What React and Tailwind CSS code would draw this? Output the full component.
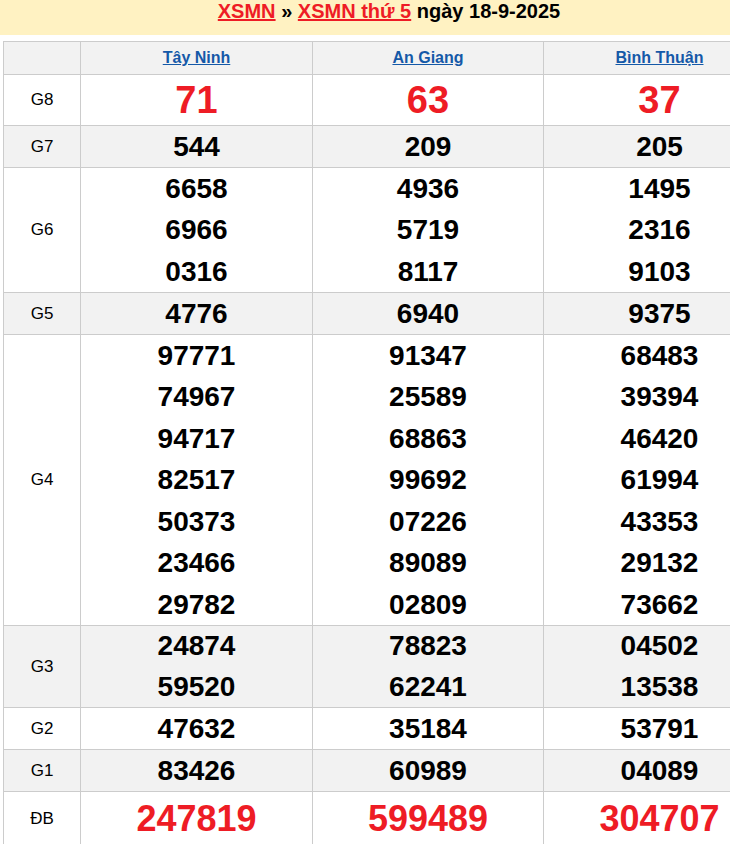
import React from "react";

const provinces = ["Tây Ninh", "An Giang", "Bình Thuận"];

const rows = [
  { label: "G8", type: "g8", values: [["71"], ["63"], ["37"]] },
  { label: "G7", lh: "leading-[41px]", values: [["544"], ["209"], ["205"]] },
  {
    label: "G6",
    lh: "leading-[41.34px]",
    values: [
      ["6658", "6966", "0316"],
      ["4936", "5719", "8117"],
      ["1495", "2316", "9103"],
    ],
  },
  { label: "G5", lh: "leading-[41px]", values: [["4776"], ["6940"], ["9375"]] },
  {
    label: "G4",
    lh: "leading-[41.43px]",
    values: [
      ["97771", "74967", "94717", "82517", "50373", "23466", "29782"],
      ["91347", "25589", "68863", "99692", "07226", "89089", "02809"],
      ["68483", "39394", "46420", "61994", "43353", "29132", "73662"],
    ],
  },
  {
    label: "G3",
    lh: "leading-[40.5px]",
    values: [
      ["24874", "59520"],
      ["78823", "62241"],
      ["04502", "13538"],
    ],
  },
  { label: "G2", lh: "leading-[41px]", values: [["47632"], ["35184"], ["53791"]] },
  { label: "G1", lh: "leading-[41px]", values: [["83426"], ["60989"], ["04089"]] },
  { label: "ĐB", type: "db", values: [["247819"], ["599489"], ["304707"]] },
];

export default function App() {
  return (
    <div className="w-full overflow-hidden bg-white font-['Liberation_Sans',Arial,sans-serif]">
      <div className="w-[778px]">
        <div className="h-[35px] bg-[#fff2c2] text-center text-[20px] font-bold leading-[23px] text-black">
          <a className="text-[#ee1c25] underline">XSMN</a> »{" "}
          <a className="text-[#ee1c25] underline">XSMN thứ 5</a> ngày 18-9-2025
        </div>
        <table className="mx-[3px] mt-[6px] w-[772px] table-fixed border-collapse">
          <colgroup>
            <col className="w-[77px]" />
            <col className="w-[232px]" />
            <col className="w-[231px]" />
            <col className="w-[232px]" />
          </colgroup>
          <tbody>
            <tr className="bg-[#f2f2f2]">
              <td className="h-[33px] border border-[#cccccc] p-0"></td>
              {provinces.map((p) => (
                <td
                  key={p}
                  className="h-[33px] border border-[#cccccc] p-0 text-center text-[16px] font-bold"
                >
                  <a className="text-[#1559a8] underline">{p}</a>
                </td>
              ))}
            </tr>
            {rows.map((r, i) => (
              <tr key={r.label} className={i % 2 === 1 ? "bg-[#f2f2f2]" : "bg-white"}>
                <td className="border border-[#cccccc] p-0 text-center text-[17px] text-black">
                  {r.label}
                </td>
                {r.values.map((vals, j) => (
                  <td
                    key={j}
                    className="border border-[#cccccc] p-0 text-center font-bold"
                  >
                    {vals.map((v, k) =>
                      r.type === "g8" ? (
                        <div key={k} className="text-[38px] leading-[50px] text-[#ee1c25]">
                          {v}
                        </div>
                      ) : r.type === "db" ? (
                        <div key={k} className="text-[36px] leading-[54px] text-[#ee1c25]">
                          {v}
                        </div>
                      ) : (
                        <div key={k} className={"text-[28px] text-black " + r.lh}>
                          {v}
                        </div>
                      )
                    )}
                  </td>
                ))}
              </tr>
            ))}
          </tbody>
        </table>
      </div>
    </div>
  );
}
